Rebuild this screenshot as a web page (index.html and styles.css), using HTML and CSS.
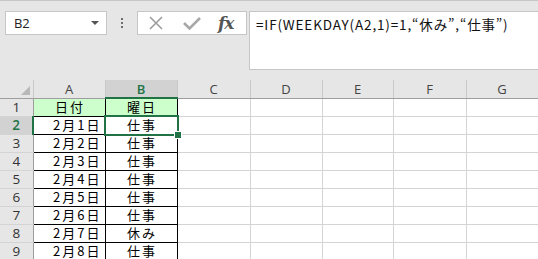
FILE: index.html
```html
<!DOCTYPE html>
<html lang="ja">
<head>
<meta charset="utf-8">
<link rel="stylesheet" href="styles.css">
</head>
<body>
<div class="topbar">
  <div class="namebox"><span class="ref">B2</span><span class="drop"></span></div>
  <div class="dots"><i></i><i></i><i></i></div>
  <div class="fxbox">
    <svg class="ic-x" width="14" height="14" viewBox="0 0 14 14"><path d="M1 1 L13 13 M13 1 L1 13" stroke="#9c9c9c" stroke-width="1.6" fill="none"/></svg>
    <svg class="ic-ok" width="18" height="14" viewBox="0 0 18 14"><path d="M1 7 L6.5 12.5 L17 2" stroke="#a8a8a8" stroke-width="2.6" fill="none"/></svg>
    <span class="fx">fx</span>
  </div>
  <div class="formula">=IF(WEEKDAY(A2,1)=1,“休み”,“仕事”)</div>
</div>
<div class="sheet">
  <table class="grid">
    <colgroup>
      <col class="c-rh"><col class="c72"><col class="c72"><col class="c73"><col class="c72"><col class="c71"><col class="c73"><col class="c72">
    </colgroup>
    <tr class="hdr">
      <th class="corner"><span class="tri"></span></th>
      <th>A</th><th class="sel-col">B</th><th>C</th><th>D</th><th>E</th><th>F</th><th>G</th>
    </tr>
    <tr><th class="rh">1</th><td class="d head">日付</td><td class="d head">曜日</td><td></td><td></td><td></td><td></td><td></td></tr>
    <tr><th class="rh sel-row">2</th><td class="d date">2月1日</td><td class="d day active">仕事<span class="selbox"><span class="handle"></span></span></td><td></td><td></td><td></td><td></td><td></td></tr>
    <tr><th class="rh">3</th><td class="d date">2月2日</td><td class="d day">仕事</td><td></td><td></td><td></td><td></td><td></td></tr>
    <tr><th class="rh">4</th><td class="d date">2月3日</td><td class="d day">仕事</td><td></td><td></td><td></td><td></td><td></td></tr>
    <tr><th class="rh">5</th><td class="d date">2月4日</td><td class="d day">仕事</td><td></td><td></td><td></td><td></td><td></td></tr>
    <tr><th class="rh">6</th><td class="d date">2月5日</td><td class="d day">仕事</td><td></td><td></td><td></td><td></td><td></td></tr>
    <tr><th class="rh">7</th><td class="d date">2月6日</td><td class="d day">仕事</td><td></td><td></td><td></td><td></td><td></td></tr>
    <tr><th class="rh">8</th><td class="d date">2月7日</td><td class="d day">休み</td><td></td><td></td><td></td><td></td><td></td></tr>
    <tr><th class="rh">9</th><td class="d date">2月8日</td><td class="d day">仕事</td><td></td><td></td><td></td><td></td><td></td></tr>
  </table>
</div>
</body>
</html>
```

FILE: styles.css
```css
html, body {
  margin: 0;
  padding: 0;
  background: #ffffff;
  overflow: hidden;
}
body {
  width: 538px;
  height: 259px;
  font-family: "Noto Sans CJK JP", "Noto Sans", sans-serif;
}
.topbar {
  height: 80px;
  background: #e6e6e6;
  border-top: 1px solid #c6c6c6;
  display: flex;
  align-items: flex-start;
  padding-top: 10px;
  box-sizing: border-box;
  padding-left: 5px;
}
.namebox {
  height: 22px;
  background: #fff;
  border: 1px solid #c6c6c6;
  display: flex;
  align-items: center;
  justify-content: space-between;
  padding: 0 7px 0 8px;
  box-sizing: content-box;
  width: 85px;
}
.ref {
  font-family: "Open Sans", "Noto Sans", sans-serif;
  font-size: 13px;
  color: #222;
  letter-spacing: -0.2px;
}
.drop {
  width: 0;
  height: 0;
  border-left: 4px solid transparent;
  border-right: 4px solid transparent;
  border-top: 4px solid #555;
}
.dots {
  width: 30px;
  height: 24px;
  display: flex;
  flex-direction: column;
  align-items: center;
  justify-content: center;
  gap: 2px;
}
.dots i {
  width: 2px;
  height: 2px;
  background: #6e6e6e;
  display: block;
}
.fxbox {
  height: 22px;
  background: #fff;
  border: 1px solid #c6c6c6;
  display: flex;
  align-items: center;
  padding-left: 11px;
  box-sizing: content-box;
  width: 97px;
}
.ic-x { margin-right: 20px; }
.ic-ok { margin-right: 17px; }
.fx {
  font-family: "DejaVu Serif", "Liberation Serif", serif;
  font-style: italic;
  font-weight: bold;
  font-size: 17px;
  color: #555;
  letter-spacing: -1px;
  line-height: 20px;
}
.formula {
  margin-left: 2px;
  flex: 1;
  height: 59px;
  background: #fff;
  border: 1px solid #c6c6c6;
  border-right: none;
  font-size: 13.5px;
  line-height: 20px;
  padding: 2px 0 0 6px;
  box-sizing: border-box;
  color: #111;
  white-space: nowrap;
  letter-spacing: 0.85px;
}
.sheet {
  height: 179px;
  overflow: hidden;
  background: #fff;
}
.grid {
  border-collapse: collapse;
  table-layout: fixed;
  width: 538px;
}
.c-rh { width: 33px; }
.c72 { width: 72px; }
.c73 { width: 73px; }
.c71 { width: 71px; }
.grid th, .grid td {
  height: 18px;
  padding: 0;
  border: 1px solid #d4d4d4;
  box-sizing: border-box;
  overflow: visible;
}
.hdr th {
  background: #e6e6e6;
  font-family: "Open Sans", "Noto Sans", sans-serif;
  font-weight: normal;
  font-size: 13px;
  color: #444;
  border-top: none;
  border-left: 1px solid #c9c9c9;
  border-right: 1px solid #c9c9c9;
  border-bottom: 1px solid #9e9e9e;
  line-height: 16px;
}
.hdr th.sel-col {
  background: #d2d2d2;
  color: #217346;
  font-weight: 600;
  border-bottom: 2px solid #217346;
}
.corner { position: relative; border-left: none !important; }
.tri {
  position: absolute;
  right: 3px;
  bottom: 3px;
  width: 0;
  height: 0;
  border-left: 9px solid transparent;
  border-bottom: 9px solid #b8b8b8;
}
.rh {
  background: #e6e6e6;
  font-family: "Open Sans", "Noto Sans", sans-serif;
  font-weight: normal;
  font-size: 13.5px;
  color: #333;
  border-left: none !important;
  border-right: 1px solid #9e9e9e !important;
  border-top: 1px solid #d4d4d4;
  line-height: 16px;
}
.rh.sel-row {
  background: #d2d2d2;
  color: #217346;
  font-weight: 600;
  border-right: 2px solid #217346 !important;
}
.grid td.d {
  border: 1px solid #000;
  font-size: 13px;
  line-height: 16px;
  color: #000;
  white-space: nowrap;
}
.grid td.head {
  background: #ccffcc;
  text-align: center;
  letter-spacing: 2px;
  text-indent: 2px;
}
.grid td.date {
  text-align: right;
  padding-right: 3px;
  letter-spacing: 2px;
}
.grid td.day {
  text-align: center;
  letter-spacing: 2px;
  text-indent: 2px;
}
.active { position: relative; }
.selbox {
  position: absolute;
  left: -2px;
  top: -2px;
  right: -2px;
  bottom: -2px;
  border: 2px solid #217346;
}
.handle {
  position: absolute;
  right: -5px;
  bottom: -5px;
  width: 6px;
  height: 6px;
  background: #217346;
  border: 1px solid #fff;
}
```
